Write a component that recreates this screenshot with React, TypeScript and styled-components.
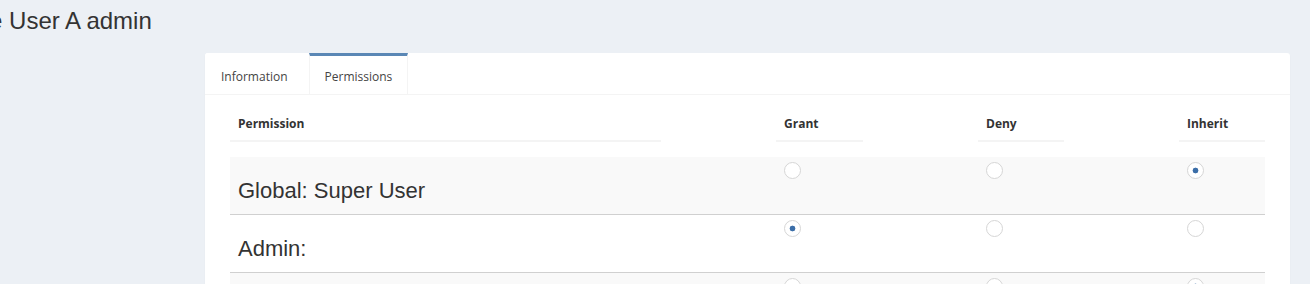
import React from "react";
import styled, { createGlobalStyle } from "styled-components";

const GlobalStyle = createGlobalStyle`
  html, body {
    margin: 0;
    padding: 0;
    background: #ecf0f5;
    overflow: hidden;
  }
  * { box-sizing: border-box; }
`;

const Page = styled.div`
  padding: 8px 20px 0 0;
`;

const TitleBar = styled.div`
  height: 45px;
  overflow: visible;
`;

const Title = styled.h1`
  margin: 0 0 0 -75px;
  font-family: "Liberation Sans", Arial, sans-serif;
  font-weight: 400;
  font-size: 24px;
  line-height: 26px;
  color: #333;
  white-space: nowrap;
`;

const Card = styled.div`
  margin-left: 205px;
  background: #fff;
  border-radius: 3px;
  box-shadow: 0 1px 1px rgba(0, 0, 0, 0.1);
  height: 400px;
`;

const TabList = styled.div`
  display: flex;
  border-bottom: 1px solid #f4f4f4;
`;

const Tab = styled.div<{ $active?: boolean }>`
  font-family: "Open Sans", "Noto Sans", sans-serif;
  font-size: 12px;
  line-height: 17px;
  color: #444;
  padding: 12px 15px 9px;
  margin-right: 5px;
  border-top: 3px solid ${(p) => (p.$active ? "#5a87b5" : "transparent")};
  border-left: 1px solid ${(p) => (p.$active ? "#f4f4f4" : "transparent")};
  border-right: 1px solid ${(p) => (p.$active ? "#f4f4f4" : "transparent")};
  border-top-left-radius: ${(p) => (p.$active ? "0" : "3px")};
  background: #fff;
  cursor: pointer;
`;

const TabContent = styled.div`
  padding: 12px 25px;
`;

const Grid = styled.div`
  display: grid;
  grid-template-columns: 1fr 87px 86px 86px;
  column-gap: 115px;
`;

const HeadRow = styled(Grid)`
  margin-bottom: 15px;
`;

const HeadCell = styled.div`
  font-family: "Open Sans", "Noto Sans", sans-serif;
  font-weight: 700;
  font-size: 12px;
  line-height: 17px;
  color: #333;
  padding: 8px;
  border-bottom: 2px solid #f4f4f4;
`;

const Row = styled(Grid)<{ $striped?: boolean }>`
  background: ${(p) => (p.$striped ? "#f9f9f9" : "#fff")};
  border-bottom: 1px solid #d0d0d0;
  align-items: start;
`;

const LabelCell = styled.div`
  font-family: "Liberation Sans", Arial, sans-serif;
  font-size: 22px;
  line-height: 25px;
  color: #333;
  padding: 21px 8px 11px;
`;

const RadioCell = styled.div`
  padding: 5px 8px 0;
  display: flex;
`;

const Radio = styled.input.attrs({ type: "radio" })`
  appearance: none;
  -webkit-appearance: none;
  margin: 0;
  width: 17px;
  height: 17px;
  border-radius: 50%;
  border: 1px solid #d6d6d6;
  background: #fff;
  cursor: pointer;
  &:checked {
    background: radial-gradient(circle, #3b6ea8 0 2.6px, #fff 3.2px);
  }
`;

type Choice = "grant" | "deny" | "inherit";

const permissions: { label: string; value: Choice }[] = [
  { label: "Global: Super User", value: "inherit" },
  { label: "Admin:", value: "grant" },
  { label: "Admin: Users", value: "inherit" },
];

const choices: Choice[] = ["grant", "deny", "inherit"];

export default function App() {
  return (
    <>
      <GlobalStyle />
      <Page>
        <TitleBar>
          <Title>Update User A admin</Title>
        </TitleBar>
        <Card>
          <TabList>
            <Tab>Information</Tab>
            <Tab $active>Permissions</Tab>
          </TabList>
          <TabContent>
            <HeadRow>
              <HeadCell>Permission</HeadCell>
              <HeadCell>Grant</HeadCell>
              <HeadCell>Deny</HeadCell>
              <HeadCell>Inherit</HeadCell>
            </HeadRow>
            {permissions.map((p, i) => (
              <Row key={p.label} $striped={i % 2 === 0}>
                <LabelCell>{p.label}</LabelCell>
                {choices.map((c) => (
                  <RadioCell key={c}>
                    <Radio name={`perm-${i}`} defaultChecked={p.value === c} />
                  </RadioCell>
                ))}
              </Row>
            ))}
          </TabContent>
        </Card>
      </Page>
    </>
  );
}
